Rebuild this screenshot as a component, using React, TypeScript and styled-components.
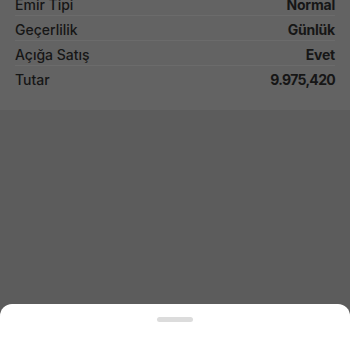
import React from 'react';
import styled, { createGlobalStyle } from 'styled-components';

const GlobalStyle = createGlobalStyle`
    html, body {
        margin: 0;
        padding: 0;
        background: #5c5c5c;
        font-family: Inter, "Noto Sans", sans-serif;
        overflow: hidden;
    }
`;

const Screen = styled.div`
    height: 350px;
    display: flex;
    flex-direction: column;
    background: #5c5c5c;
`;

const OrderCard = styled.div`
    background: #636363;
    padding: 0 15px 19px;
`;

const List = styled.div`
    margin-top: -9px;
`;

const Row = styled.div<{ last?: boolean }>`
    height: 25px;
    display: flex;
    align-items: center;
    justify-content: space-between;
    border-bottom: ${(p) => (p.last ? 'none' : '1px solid #6b6b6b')};
    box-sizing: border-box;
    padding-top: 2px;
    font-size: 14px;
    color: #161616;
`;

const Label = styled.span`
    font-weight: 500;
`;

const Value = styled.span<{ numeric?: boolean }>`
    font-weight: 700;
    letter-spacing: ${(p) => (p.numeric ? '-0.7px' : '-0.2px')};
`;

const Spacer = styled.div`
    flex: 1;
`;

const Sheet = styled.div`
    height: 46px;
    background: #ffffff;
    border-radius: 12px 12px 0 0;
    display: flex;
    justify-content: center;
    padding-top: 13px;
    box-sizing: border-box;
`;

const Handle = styled.div`
    width: 36px;
    height: 5px;
    border-radius: 3px;
    background: #dcdcdc;
`;

const rows = [
    { label: 'Emir Tipi', value: 'Normal' },
    { label: 'Geçerlilik', value: 'Günlük' },
    { label: 'Açığa Satış', value: 'Evet' },
    { label: 'Tutar', value: '9.975,420', numeric: true },
];

const App = () => {
    return (
        <>
            <GlobalStyle />
            <Screen>
                <OrderCard>
                    <List>
                        {rows.map((r, i) => (
                            <Row key={r.label} last={i === rows.length - 1}>
                                <Label>{r.label}</Label>
                                <Value numeric={r.numeric}>{r.value}</Value>
                            </Row>
                        ))}
                    </List>
                </OrderCard>
                <Spacer />
                <Sheet>
                    <Handle />
                </Sheet>
            </Screen>
        </>
    );
};

export default App;
